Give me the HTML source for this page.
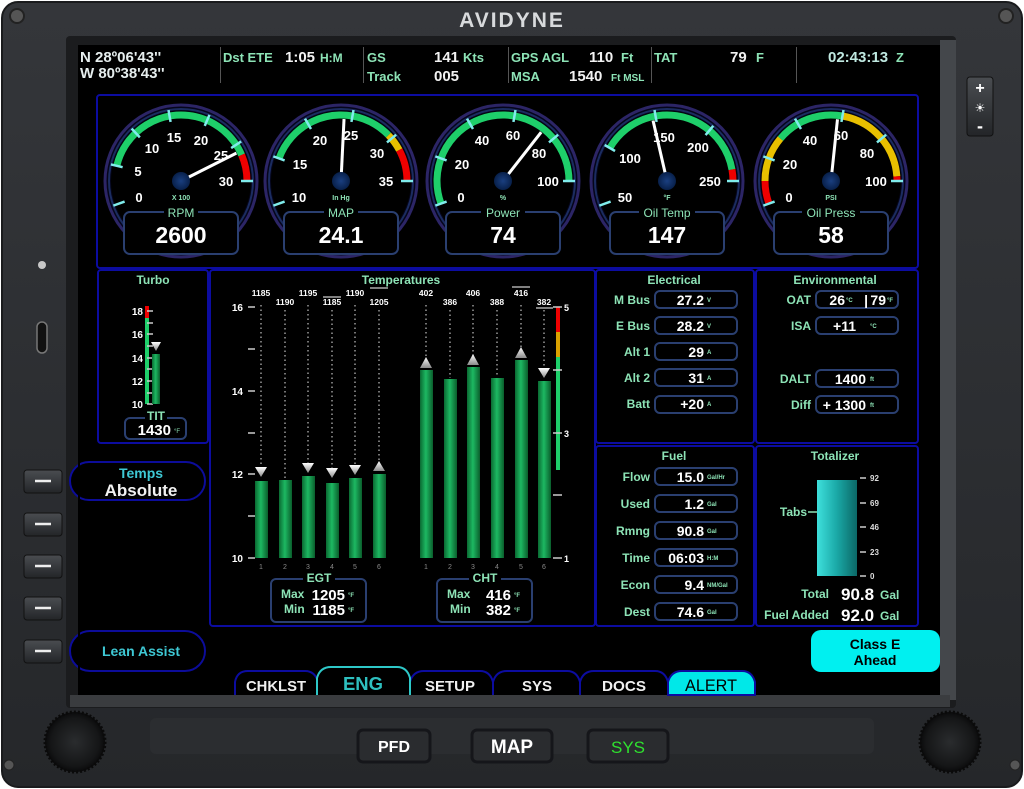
<!DOCTYPE html>
<html><head><meta charset="utf-8"><style>
html,body{margin:0;padding:0;background:#fff;}
svg{display:block;font-family:"Liberation Sans",Arial,sans-serif;}
.g{fill:#8de3b6}.w{fill:#f2f2f2}
</style></head><body>
<svg width="1024" height="789" viewBox="0 0 1024 789" xmlns="http://www.w3.org/2000/svg">
<defs>
<linearGradient id="bz" x1="0" y1="0" x2="0" y2="1"><stop offset="0" stop-color="#34363a"/><stop offset="1" stop-color="#25272a"/></linearGradient>
<linearGradient id="bar" x1="0" y1="0" x2="1" y2="0"><stop offset="0" stop-color="#0a6a32"/><stop offset="0.45" stop-color="#1db862"/><stop offset="1" stop-color="#0a5e2c"/></linearGradient>
<linearGradient id="teal" x1="0" y1="0" x2="1" y2="0"><stop offset="0" stop-color="#3ee0dc"/><stop offset="0.5" stop-color="#1aa8a6"/><stop offset="1" stop-color="#0b6866"/></linearGradient>
<linearGradient id="btn" x1="0" y1="0" x2="0" y2="1"><stop offset="0" stop-color="#4a4d51"/><stop offset="1" stop-color="#232528"/></linearGradient>
<radialGradient id="knob"><stop offset="0" stop-color="#2a2c2e"/><stop offset="0.8" stop-color="#151617"/><stop offset="1" stop-color="#0a0a0b"/></radialGradient>
<radialGradient id="hub"><stop offset="0" stop-color="#1a3f80"/><stop offset="1" stop-color="#08204a"/></radialGradient>
<linearGradient id="tri" x1="0" y1="0" x2="0" y2="1"><stop offset="0" stop-color="#ffffff"/><stop offset="1" stop-color="#8a8a8a"/></linearGradient>
</defs>
<rect x="2" y="2" width="1020" height="785" rx="16" fill="url(#bz)" stroke="#1a1b1d" stroke-width="2"/>
<rect x="66" y="36" width="890" height="672" rx="4" fill="#1b1c1e"/>
<rect x="940" y="40" width="16" height="660" fill="#44474b"/>
<rect x="70" y="695" width="880" height="12" fill="#3a3c3f"/>
<text x="512" y="27" text-anchor="middle" font-size="21" font-weight="bold" fill="#d8dadc" letter-spacing="2">AVIDYNE</text>
<circle cx="17" cy="16" r="7" fill="#555" stroke="#222" stroke-width="2"/><circle cx="1006" cy="16" r="7" fill="#555" stroke="#222" stroke-width="2"/>
<circle cx="9" cy="765" r="5" fill="#555" stroke="#222"/><circle cx="1015" cy="765" r="5" fill="#555" stroke="#222"/>
<circle cx="42" cy="265" r="4" fill="#c8c8c8"/>
<rect x="37" y="322" width="10" height="31" rx="5" fill="#111" stroke="#777" stroke-width="1.5"/>
<g fill="url(#btn)" stroke="#111">
<rect x="24" y="470" width="38" height="23" rx="3"/><rect x="24" y="513" width="38" height="23" rx="3"/><rect x="24" y="555" width="38" height="23" rx="3"/><rect x="24" y="597" width="38" height="23" rx="3"/><rect x="24" y="640" width="38" height="23" rx="3"/>
</g>
<g stroke="#eee" stroke-width="2.5"><line x1="35" y1="481" x2="51" y2="481"/><line x1="35" y1="524" x2="51" y2="524"/><line x1="35" y1="566" x2="51" y2="566"/><line x1="35" y1="608" x2="51" y2="608"/><line x1="35" y1="651" x2="51" y2="651"/></g>
<rect x="967" y="77" width="26" height="59" rx="3" fill="url(#btn)" stroke="#111"/>
<text x="980" y="93" text-anchor="middle" font-size="16" font-weight="bold" fill="#fff">+</text>
<text x="980" y="112" text-anchor="middle" font-size="12" fill="#fff">☀</text>
<text x="980" y="132" text-anchor="middle" font-size="18" font-weight="bold" fill="#fff">-</text>
<circle cx="75" cy="742" r="30" fill="url(#knob)" stroke="#0a0a0a" stroke-width="3" stroke-dasharray="2 2"/>
<circle cx="950" cy="742" r="30" fill="url(#knob)" stroke="#0a0a0a" stroke-width="3" stroke-dasharray="2 2"/>
<rect x="150" y="718" width="724" height="36" rx="6" fill="#2b2d30"/>
<g stroke="#15161a" stroke-width="3"><rect x="358" y="730" width="72" height="32" rx="5" fill="#2a2c2f"/><rect x="472" y="730" width="80" height="32" rx="5" fill="#2a2c2f"/><rect x="588" y="730" width="80" height="32" rx="5" fill="#2a2c2f"/></g>
<text x="394" y="752" text-anchor="middle" font-size="16" font-weight="bold" fill="#fff">PFD</text>
<text x="512" y="753" text-anchor="middle" font-size="19" font-weight="bold" fill="#fff">MAP</text>
<text x="628" y="753" text-anchor="middle" font-size="17" fill="#2fe02f">SYS</text>
<rect x="78" y="45" width="862" height="650" fill="#000"/>
<g font-size="15" font-weight="bold">
<text x="80" y="62" fill="#e6eeee">N 28º06'43''</text><text x="80" y="78" fill="#e6eeee">W 80º38'43''</text>
<text x="223" y="62" class="g" font-size="13">Dst ETE</text><text x="285" y="62" class="w">1:05</text><text x="320" y="62" class="g" font-size="12">H:M</text>
<text x="367" y="62" class="g" font-size="13">GS</text><text x="434" y="62" class="w">141</text><text x="463" y="62" class="g" font-size="13">Kts</text>
<text x="367" y="81" class="g" font-size="13">Track</text><text x="434" y="81" class="w">005</text>
<text x="511" y="62" class="g" font-size="13">GPS AGL</text><text x="589" y="62" class="w">110</text><text x="621" y="62" class="g" font-size="13">Ft</text>
<text x="511" y="81" class="g" font-size="13">MSA</text><text x="569" y="81" class="w">1540</text><text x="611" y="81" class="g" font-size="10">Ft MSL</text>
<text x="654" y="62" class="g" font-size="13">TAT</text><text x="730" y="62" class="w">79</text><text x="756" y="62" class="g" font-size="13">F</text>
<text x="828" y="62" fill="#bfe8e0">02:43:13</text><text x="896" y="62" class="g" font-size="13">Z</text>
</g>
<g stroke="#555" stroke-width="1"><line x1="220.5" y1="47" x2="220.5" y2="83"/><line x1="363.5" y1="47" x2="363.5" y2="83"/><line x1="508.5" y1="47" x2="508.5" y2="83"/><line x1="651.5" y1="47" x2="651.5" y2="83"/><line x1="796.5" y1="47" x2="796.5" y2="83"/></g>
<g fill="none" stroke="#0c0ca0" stroke-width="2">
<rect x="97" y="95" width="821" height="173" rx="3"/>
<rect x="98" y="270" width="110" height="173" rx="3"/>
<rect x="210" y="270" width="385" height="356" rx="3"/>
<rect x="596" y="270" width="158" height="173" rx="3"/>
<rect x="756" y="270" width="162" height="173" rx="3"/>
<rect x="596" y="446" width="158" height="180" rx="3"/>
<rect x="756" y="446" width="162" height="180" rx="3"/>
</g>
<g id="gauges" font-weight="bold">
<g transform="translate(181,181)">
<circle r="76" fill="#05051a" stroke="#2c2566" stroke-width="3"/><circle r="72" fill="none" stroke="#1b2c60" stroke-width="2"/><circle r="70" fill="#000"/>
<circle r="66" fill="none" stroke="#1ecf6a" stroke-width="7" stroke-dasharray="165.2 1000" transform="rotate(193.3)"/>
<circle r="66" fill="none" stroke="#ee0000" stroke-width="7" stroke-dasharray="26.8 1000" transform="rotate(336.7)"/>
<g stroke="#80ecec" stroke-width="2.5"><line x1="60" x2="72" transform="rotate(160)"/><line x1="60" x2="72" transform="rotate(193.3)"/><line x1="60" x2="72" transform="rotate(226.7)"/><line x1="60" x2="72" transform="rotate(260)"/><line x1="60" x2="72" transform="rotate(293.3)"/><line x1="60" x2="72" transform="rotate(326.7)"/><line x1="60" x2="72" transform="rotate(360)"/></g>
<g fill="#fff" font-size="13" text-anchor="middle"><text x="-42" y="21">0</text><text x="-43" y="-5">5</text><text x="-29" y="-28">10</text><text x="-7" y="-39">15</text><text x="20" y="-36">20</text><text x="40" y="-21">25</text><text x="45" y="5">30</text></g>
<line x1="0" y1="0" x2="62" y2="0" stroke="#fff" stroke-width="3" transform="rotate(333.3)"/>
<circle r="9" fill="url(#hub)"/>
<text y="19" text-anchor="middle" font-size="7" class="g">X 100</text>
<rect x="-57" y="31" width="114" height="42" rx="6" fill="#000" stroke="#2a3f70" stroke-width="2"/>
<rect x="-17" y="28" width="34" height="8" fill="#000"/>
<text y="36" text-anchor="middle" font-size="12" class="g" font-weight="normal">RPM</text>
<text y="62" text-anchor="middle" font-size="23" fill="#fff">2600</text>
</g>
<g transform="translate(341,181)">
<circle r="76" fill="#05051a" stroke="#2c2566" stroke-width="3"/><circle r="72" fill="none" stroke="#1b2c60" stroke-width="2"/><circle r="70" fill="#000"/>
<circle r="66" fill="none" stroke="#1ecf6a" stroke-width="7" stroke-dasharray="133.6 1000" transform="rotate(200)"/>
<circle r="66" fill="none" stroke="#e8c000" stroke-width="7" stroke-dasharray="18.4 1000" transform="rotate(316)"/>
<circle r="66" fill="none" stroke="#ee0000" stroke-width="7" stroke-dasharray="32.3 1000" transform="rotate(332)"/>
<g stroke="#80ecec" stroke-width="2.5"><line x1="60" x2="72" transform="rotate(160)"/><line x1="60" x2="72" transform="rotate(200)"/><line x1="60" x2="72" transform="rotate(240)"/><line x1="60" x2="72" transform="rotate(280)"/><line x1="60" x2="72" transform="rotate(320)"/><line x1="60" x2="72" transform="rotate(360)"/></g>
<g fill="#fff" font-size="13" text-anchor="middle"><text x="-42" y="21">10</text><text x="-41" y="-12">15</text><text x="-21" y="-36">20</text><text x="10" y="-41">25</text><text x="36" y="-23">30</text><text x="45" y="5">35</text></g>
<line x1="0" y1="0" x2="62" y2="0" stroke="#fff" stroke-width="3" transform="rotate(272.8)"/>
<circle r="9" fill="url(#hub)"/>
<text y="19" text-anchor="middle" font-size="7" class="g">In Hg</text>
<rect x="-57" y="31" width="114" height="42" rx="6" fill="#000" stroke="#2a3f70" stroke-width="2"/>
<rect x="-17" y="28" width="34" height="8" fill="#000"/>
<text y="36" text-anchor="middle" font-size="12" class="g" font-weight="normal">MAP</text>
<text y="62" text-anchor="middle" font-size="23" fill="#fff">24.1</text>
</g>
<g transform="translate(503,181)">
<circle r="76" fill="#05051a" stroke="#2c2566" stroke-width="3"/><circle r="72" fill="none" stroke="#1b2c60" stroke-width="2"/><circle r="70" fill="#000"/>
<circle r="66" fill="none" stroke="#1ecf6a" stroke-width="7" stroke-dasharray="230.4 1000" transform="rotate(160)"/>
<g stroke="#80ecec" stroke-width="2.5"><line x1="60" x2="72" transform="rotate(160)"/><line x1="60" x2="72" transform="rotate(200)"/><line x1="60" x2="72" transform="rotate(240)"/><line x1="60" x2="72" transform="rotate(280)"/><line x1="60" x2="72" transform="rotate(320)"/><line x1="60" x2="72" transform="rotate(360)"/></g>
<g fill="#fff" font-size="13" text-anchor="middle"><text x="-42" y="21">0</text><text x="-41" y="-12">20</text><text x="-21" y="-36">40</text><text x="10" y="-41">60</text><text x="36" y="-23">80</text><text x="45" y="5">100</text></g>
<line x1="0" y1="0" x2="62" y2="0" stroke="#fff" stroke-width="3" transform="rotate(308)"/>
<circle r="9" fill="url(#hub)"/>
<text y="19" text-anchor="middle" font-size="7" class="g">%</text>
<rect x="-57" y="31" width="114" height="42" rx="6" fill="#000" stroke="#2a3f70" stroke-width="2"/>
<rect x="-22" y="28" width="44" height="8" fill="#000"/>
<text y="36" text-anchor="middle" font-size="12" class="g" font-weight="normal">Power</text>
<text y="62" text-anchor="middle" font-size="23" fill="#fff">74</text>
</g>
<g transform="translate(667,181)">
<circle r="76" fill="#05051a" stroke="#2c2566" stroke-width="3"/><circle r="72" fill="none" stroke="#1b2c60" stroke-width="2"/><circle r="70" fill="#000"/>
<circle r="66" fill="none" stroke="#1ecf6a" stroke-width="7" stroke-dasharray="161.3 1000" transform="rotate(210)"/>
<circle r="66" fill="none" stroke="#ee0000" stroke-width="7" stroke-dasharray="11.5 1000" transform="rotate(350)"/>
<g stroke="#80ecec" stroke-width="2.5"><line x1="60" x2="72" transform="rotate(160)"/><line x1="60" x2="72" transform="rotate(210)"/><line x1="60" x2="72" transform="rotate(260)"/><line x1="60" x2="72" transform="rotate(310)"/><line x1="60" x2="72" transform="rotate(360)"/></g>
<g fill="#fff" font-size="13" text-anchor="middle"><text x="-42" y="21">50</text><text x="-37" y="-18">100</text><text x="-3" y="-39">150</text><text x="31" y="-29">200</text><text x="43" y="5">250</text></g>
<line x1="0" y1="0" x2="62" y2="0" stroke="#fff" stroke-width="3" transform="rotate(257)"/>
<circle r="9" fill="url(#hub)"/>
<text y="19" text-anchor="middle" font-size="7" class="g">°F</text>
<rect x="-57" y="31" width="114" height="42" rx="6" fill="#000" stroke="#2a3f70" stroke-width="2"/>
<rect x="-28" y="28" width="56" height="8" fill="#000"/>
<text y="36" text-anchor="middle" font-size="12" class="g" font-weight="normal">Oil Temp</text>
<text y="62" text-anchor="middle" font-size="23" fill="#fff">147</text>
</g>
<g transform="translate(831,181)">
<circle r="76" fill="#05051a" stroke="#2c2566" stroke-width="3"/><circle r="72" fill="none" stroke="#1b2c60" stroke-width="2"/><circle r="70" fill="#000"/>
<circle r="66" fill="none" stroke="#ee0000" stroke-width="7" stroke-dasharray="23 1000" transform="rotate(160)"/>
<circle r="66" fill="none" stroke="#e8c000" stroke-width="7" stroke-dasharray="46.1 1000" transform="rotate(180)"/>
<circle r="66" fill="none" stroke="#1ecf6a" stroke-width="7" stroke-dasharray="69.1 1000" transform="rotate(220)"/>
<circle r="66" fill="none" stroke="#e8c000" stroke-width="7" stroke-dasharray="87.5 1000" transform="rotate(280)"/>
<circle r="66" fill="none" stroke="#ee0000" stroke-width="7" stroke-dasharray="4.6 1000" transform="rotate(356)"/>
<g stroke="#80ecec" stroke-width="2.5"><line x1="60" x2="72" transform="rotate(160)"/><line x1="60" x2="72" transform="rotate(200)"/><line x1="60" x2="72" transform="rotate(240)"/><line x1="60" x2="72" transform="rotate(280)"/><line x1="60" x2="72" transform="rotate(320)"/><line x1="60" x2="72" transform="rotate(360)"/></g>
<g fill="#fff" font-size="13" text-anchor="middle"><text x="-42" y="21">0</text><text x="-41" y="-12">20</text><text x="-21" y="-36">40</text><text x="10" y="-41">60</text><text x="36" y="-23">80</text><text x="45" y="5">100</text></g>
<line x1="0" y1="0" x2="62" y2="0" stroke="#fff" stroke-width="3" transform="rotate(276)"/>
<circle r="9" fill="url(#hub)"/>
<text y="19" text-anchor="middle" font-size="7" class="g">PSI</text>
<rect x="-57" y="31" width="114" height="42" rx="6" fill="#000" stroke="#2a3f70" stroke-width="2"/>
<rect x="-29" y="28" width="58" height="8" fill="#000"/>
<text y="36" text-anchor="middle" font-size="12" class="g" font-weight="normal">Oil Press</text>
<text y="62" text-anchor="middle" font-size="23" fill="#fff">58</text>
</g>
</g>
<text x="153" y="284" text-anchor="middle" font-size="12" font-weight="bold" class="g">Turbo</text>
<rect x="145" y="306" width="4" height="12" fill="#e00"/><rect x="145" y="318" width="4" height="86" fill="#1ecf6a"/>
<g stroke="#ccc" stroke-width="1.5"><line x1="147" y1="311" x2="153" y2="311"/><line x1="147" y1="323" x2="153" y2="323"/><line x1="147" y1="334" x2="153" y2="334"/><line x1="147" y1="346" x2="153" y2="346"/><line x1="147" y1="358" x2="153" y2="358"/><line x1="147" y1="369" x2="153" y2="369"/><line x1="147" y1="381" x2="153" y2="381"/><line x1="147" y1="393" x2="153" y2="393"/><line x1="147" y1="404" x2="153" y2="404"/></g>
<g fill="#fff" font-size="10" font-weight="bold" text-anchor="end"><text x="143" y="315">18</text><text x="143" y="338">16</text><text x="143" y="362">14</text><text x="143" y="385">12</text><text x="143" y="408">10</text></g>
<rect x="152" y="354" width="8" height="50" fill="url(#bar)"/>
<polygon points="151,342 161,342 156,351" fill="url(#tri)"/>
<rect x="125" y="418" width="61" height="21" rx="5" fill="#000" stroke="#2a3f70" stroke-width="2"/>
<rect x="145" y="412" width="22" height="8" fill="#000"/>
<text x="156" y="420" text-anchor="middle" font-size="12" font-weight="bold" class="g">TIT</text>
<text x="171" y="435" text-anchor="end" font-size="15" font-weight="bold" fill="#fff">1430</text><text x="174" y="433" font-size="6" class="g">°F</text>
<text x="401" y="284" text-anchor="middle" font-size="12" font-weight="bold" class="g">Temperatures</text>
<g fill="#fff" font-size="10" font-weight="bold" text-anchor="end"><text x="243" y="311">16</text><text x="243" y="395">14</text><text x="243" y="478">12</text><text x="243" y="562">10</text></g>
<g stroke="#ccc" stroke-width="1.5"><line x1="248" y1="307" x2="255" y2="307"/><line x1="248" y1="349" x2="255" y2="349"/><line x1="248" y1="391" x2="255" y2="391"/><line x1="248" y1="433" x2="255" y2="433"/><line x1="248" y1="474" x2="255" y2="474"/><line x1="248" y1="516" x2="255" y2="516"/><line x1="248" y1="558" x2="255" y2="558"/></g>
<g stroke="#999" stroke-width="1.5" stroke-dasharray="1.5 3">
<line x1="261" y1="305" x2="261" y2="470"/><line x1="285" y1="310" x2="285" y2="478"/><line x1="308" y1="305" x2="308" y2="466"/><line x1="332" y1="310" x2="332" y2="472"/><line x1="355" y1="305" x2="355" y2="468"/><line x1="379" y1="310" x2="379" y2="464"/>
<line x1="426" y1="305" x2="426" y2="358"/><line x1="450" y1="310" x2="450" y2="378"/><line x1="473" y1="305" x2="473" y2="356"/><line x1="497" y1="310" x2="497" y2="377"/><line x1="521" y1="305" x2="521" y2="348"/><line x1="544" y1="310" x2="544" y2="368"/>
</g>
<g fill="url(#bar)">
<rect x="255" y="481" width="13" height="77"/><rect x="279" y="480" width="13" height="78"/><rect x="302" y="476" width="13" height="82"/><rect x="326" y="483" width="13" height="75"/><rect x="349" y="478" width="13" height="80"/><rect x="373" y="474" width="13" height="84"/>
<rect x="420" y="370" width="13" height="188"/><rect x="444" y="379" width="13" height="179"/><rect x="467" y="367" width="13" height="191"/><rect x="491" y="378" width="13" height="180"/><rect x="515" y="360" width="13" height="198"/><rect x="538" y="381" width="13" height="177"/>
</g>
<g fill="url(#tri)">
<polygon points="255,467 267,467 261,477"/><polygon points="302,463 314,463 308,473"/><polygon points="326,468 338,468 332,478"/><polygon points="349,465 361,465 355,475"/><polygon points="373,471 385,471 379,461"/>
<polygon points="420,368 432,368 426,357"/><polygon points="467,365 479,365 473,354"/><polygon points="515,358 527,358 521,347"/><polygon points="538,368 550,368 544,378"/>
</g>
<g fill="#fff" font-size="8.5" font-weight="bold" text-anchor="middle">
<text x="261" y="296">1185</text><text x="285" y="305">1190</text><text x="308" y="296">1195</text><text x="332" y="305">1185</text><text x="355" y="296">1190</text><text x="379" y="305">1205</text>
<text x="426" y="296">402</text><text x="450" y="305">386</text><text x="473" y="296">406</text><text x="497" y="305">388</text><text x="521" y="296">416</text><text x="544" y="305">382</text>
</g>
<g stroke="#fff" stroke-width="1"><line x1="323" y1="297" x2="341" y2="297"/><line x1="370" y1="288" x2="388" y2="288"/><line x1="512" y1="287" x2="530" y2="287"/><line x1="536" y1="308" x2="553" y2="308"/></g>
<g fill="#888" font-size="7" text-anchor="middle"><text x="261" y="569">1</text><text x="285" y="569">2</text><text x="308" y="569">3</text><text x="332" y="569">4</text><text x="355" y="569">5</text><text x="379" y="569">6</text><text x="426" y="569">1</text><text x="450" y="569">2</text><text x="473" y="569">3</text><text x="497" y="569">4</text><text x="521" y="569">5</text><text x="544" y="569">6</text></g>
<rect x="556" y="307" width="4" height="25" fill="#e00"/><rect x="556" y="332" width="4" height="25" fill="#d9a000"/><rect x="556" y="357" width="4" height="113" fill="#1ecf6a"/>
<g stroke="#ccc" stroke-width="1.5"><line x1="553" y1="307" x2="562" y2="307"/><line x1="553" y1="370" x2="562" y2="370"/><line x1="553" y1="433" x2="562" y2="433"/><line x1="553" y1="495" x2="562" y2="495"/><line x1="553" y1="558" x2="562" y2="558"/></g>
<g fill="#fff" font-size="9" font-weight="bold"><text x="564" y="311">5</text><text x="564" y="437">3</text><text x="564" y="562">1</text></g>
<rect x="271" y="579" width="95" height="43" rx="5" fill="#000" stroke="#2a3f70" stroke-width="2"/>
<rect x="437" y="579" width="95" height="43" rx="5" fill="#000" stroke="#2a3f70" stroke-width="2"/>
<rect x="303" y="573" width="32" height="8" fill="#000"/><rect x="469" y="573" width="32" height="8" fill="#000"/>
<g font-weight="bold">
<text x="319" y="582" text-anchor="middle" font-size="12" class="g">EGT</text>
<text x="485" y="582" text-anchor="middle" font-size="12" class="g">CHT</text>
<text x="281" y="598" font-size="12" class="g">Max</text><text x="345" y="600" text-anchor="end" font-size="15" fill="#fff">1205</text><text x="348" y="597" font-size="6" class="g">°F</text>
<text x="284" y="613" font-size="12" class="g">Min</text><text x="345" y="615" text-anchor="end" font-size="15" fill="#fff">1185</text><text x="348" y="612" font-size="6" class="g">°F</text>
<text x="447" y="598" font-size="12" class="g">Max</text><text x="511" y="600" text-anchor="end" font-size="15" fill="#fff">416</text><text x="514" y="597" font-size="6" class="g">°F</text>
<text x="450" y="613" font-size="12" class="g">Min</text><text x="511" y="615" text-anchor="end" font-size="15" fill="#fff">382</text><text x="514" y="612" font-size="6" class="g">°F</text>
</g>
<g font-weight="bold">
<text x="674" y="284" text-anchor="middle" font-size="12" class="g">Electrical</text>
<text x="835" y="284" text-anchor="middle" font-size="12" class="g">Environmental</text>
<text x="674" y="460" text-anchor="middle" font-size="12" class="g">Fuel</text>
<text x="835" y="460" text-anchor="middle" font-size="12" class="g">Totalizer</text>
<g fill="#000" stroke="#2a3f70" stroke-width="2">
<rect x="655" y="291" width="82" height="17" rx="5"/><rect x="655" y="317" width="82" height="17" rx="5"/><rect x="655" y="343" width="82" height="17" rx="5"/><rect x="655" y="369" width="82" height="17" rx="5"/><rect x="655" y="396" width="82" height="17" rx="5"/>
<rect x="816" y="291" width="82" height="17" rx="5"/><rect x="816" y="317" width="82" height="17" rx="5"/><rect x="816" y="370" width="82" height="17" rx="5"/><rect x="816" y="396" width="82" height="17" rx="5"/>
<rect x="655" y="468" width="82" height="17" rx="5"/><rect x="655" y="495" width="82" height="17" rx="5"/><rect x="655" y="522" width="82" height="17" rx="5"/><rect x="655" y="549" width="82" height="17" rx="5"/><rect x="655" y="576" width="82" height="17" rx="5"/><rect x="655" y="603" width="82" height="17" rx="5"/>
</g>
<g font-size="12" class="g" text-anchor="end">
<text x="650" y="304">M Bus</text><text x="650" y="330">E Bus</text><text x="650" y="356">Alt 1</text><text x="650" y="382">Alt 2</text><text x="650" y="408">Batt</text>
<text x="811" y="304">OAT</text><text x="811" y="330">ISA</text><text x="811" y="383">DALT</text><text x="811" y="409">Diff</text>
<text x="650" y="481">Flow</text><text x="650" y="508">Used</text><text x="650" y="535">Rmng</text><text x="650" y="562">Time</text><text x="650" y="589">Econ</text><text x="650" y="616">Dest</text>
</g>
<g font-size="14" fill="#fff" text-anchor="end">
<text x="704" y="305">27.2</text><text x="704" y="331">28.2</text><text x="704" y="357">29</text><text x="704" y="383">31</text><text x="704" y="409">+20</text>
<text x="704" y="482">15.0</text><text x="704" y="509">1.2</text><text x="704" y="536">90.8</text><text x="704" y="563">06:03</text><text x="704" y="590">9.4</text><text x="704" y="617">74.6</text>
<text x="845" y="305">26</text><text x="868" y="305">|</text><text x="886" y="305">79</text><text x="856" y="331">+11</text><text x="866" y="384">1400</text><text x="866" y="410">+ 1300</text>
</g>
<g font-size="6" class="g">
<text x="707" y="302">V</text><text x="707" y="328">V</text><text x="707" y="354">A</text><text x="707" y="380">A</text><text x="707" y="406">A</text>
<text x="707" y="479">Gal/Hr</text><text x="707" y="506">Gal</text><text x="707" y="533">Gal</text><text x="707" y="560">H:M</text><text x="707" y="587">NM/Gal</text><text x="707" y="614">Gal</text>
<text x="846" y="302">°C</text><text x="887" y="302">°F</text><text x="870" y="328">°C</text><text x="870" y="381">ft</text><text x="870" y="407">ft</text>
</g>
<rect x="817" y="480" width="40" height="96" fill="url(#teal)"/>
<line x1="808" y1="512" x2="817" y2="512" stroke="#8de3b6" stroke-width="1.5"/>
<text x="807" y="516" text-anchor="end" font-size="12" class="g">Tabs</text>
<g stroke="#ccc" stroke-width="1.5"><line x1="860" y1="478" x2="866" y2="478"/><line x1="860" y1="503" x2="866" y2="503"/><line x1="860" y1="527" x2="866" y2="527"/><line x1="860" y1="552" x2="866" y2="552"/><line x1="860" y1="576" x2="866" y2="576"/></g>
<g fill="#ddd" font-size="8"><text x="870" y="481">92</text><text x="870" y="506">69</text><text x="870" y="530">46</text><text x="870" y="555">23</text><text x="870" y="579">0</text></g>
<text x="829" y="598" text-anchor="end" font-size="12" class="g">Total</text><text x="841" y="600" font-size="17" fill="#fff">90.8</text><text x="880" y="599" font-size="12" class="g">Gal</text>
<text x="829" y="619" text-anchor="end" font-size="12" class="g">Fuel Added</text><text x="841" y="621" font-size="17" fill="#fff">92.0</text><text x="880" y="620" font-size="12" class="g">Gal</text>
</g>
<rect x="70" y="462" width="135" height="38" rx="19" fill="#000" stroke="#0c0c9a" stroke-width="2"/>
<text x="141" y="478" text-anchor="middle" font-size="14" font-weight="bold" fill="#3ec8d4">Temps</text>
<text x="141" y="496" text-anchor="middle" font-size="17" font-weight="bold" fill="#f2f2f2">Absolute</text>
<rect x="70" y="631" width="135" height="40" rx="20" fill="#000" stroke="#0c0c9a" stroke-width="2"/>
<text x="141" y="656" text-anchor="middle" font-size="14" font-weight="bold" fill="#3ec8d4">Lean Assist</text>
<rect x="78" y="455" width="2" height="240" fill="#000"/>
<rect x="811" y="630" width="129" height="42" rx="10" fill="#00f0f0"/>
<text x="875" y="649" text-anchor="middle" font-size="14" font-weight="bold" fill="#000">Class E</text>
<text x="875" y="665" text-anchor="middle" font-size="14" font-weight="bold" fill="#000">Ahead</text>
<g stroke="#0c0ca0" stroke-width="2" fill="#000">
<path d="M235,695 L235,682 Q237,671 248,671 L305,671 Q315,671 318,682 L318,695"/>
<path d="M410,695 L410,682 Q413,671 424,671 L480,671 Q490,671 493,682 L493,695"/>
<path d="M493,695 L493,682 Q496,671 507,671 L567,671 Q577,671 580,682 L580,695"/>
<path d="M580,695 L580,682 Q583,671 594,671 L655,671 Q665,671 668,682 L668,695"/>
</g>
<path d="M668,695 L668,682 Q671,671 682,671 L742,671 Q752,671 755,682 L755,695 Z" fill="#00e8e8" stroke="#0c0ca0" stroke-width="2"/>
<path d="M317,695 L317,678 Q320,667 331,667 L397,667 Q407,667 410,678 L410,695" fill="#000" stroke="#2ec8c8" stroke-width="2"/>
<g font-size="15" font-weight="bold" text-anchor="middle">
<text x="276" y="691" fill="#f0f0f0" textLength="60" lengthAdjust="spacingAndGlyphs">CHKLST</text>
<text x="363" y="690" fill="#2ec0c0" font-size="18" textLength="40" lengthAdjust="spacingAndGlyphs">ENG</text>
<text x="450" y="691" fill="#f0f0f0" textLength="50" lengthAdjust="spacingAndGlyphs">SETUP</text>
<text x="537" y="691" fill="#f0f0f0" textLength="30" lengthAdjust="spacingAndGlyphs">SYS</text>
<text x="624" y="691" fill="#f0f0f0" textLength="44" lengthAdjust="spacingAndGlyphs">DOCS</text>
<text x="711" y="691" fill="#000" font-weight="normal" font-size="17" textLength="52" lengthAdjust="spacingAndGlyphs">ALERT</text>
</g>
</svg>
</body></html>
